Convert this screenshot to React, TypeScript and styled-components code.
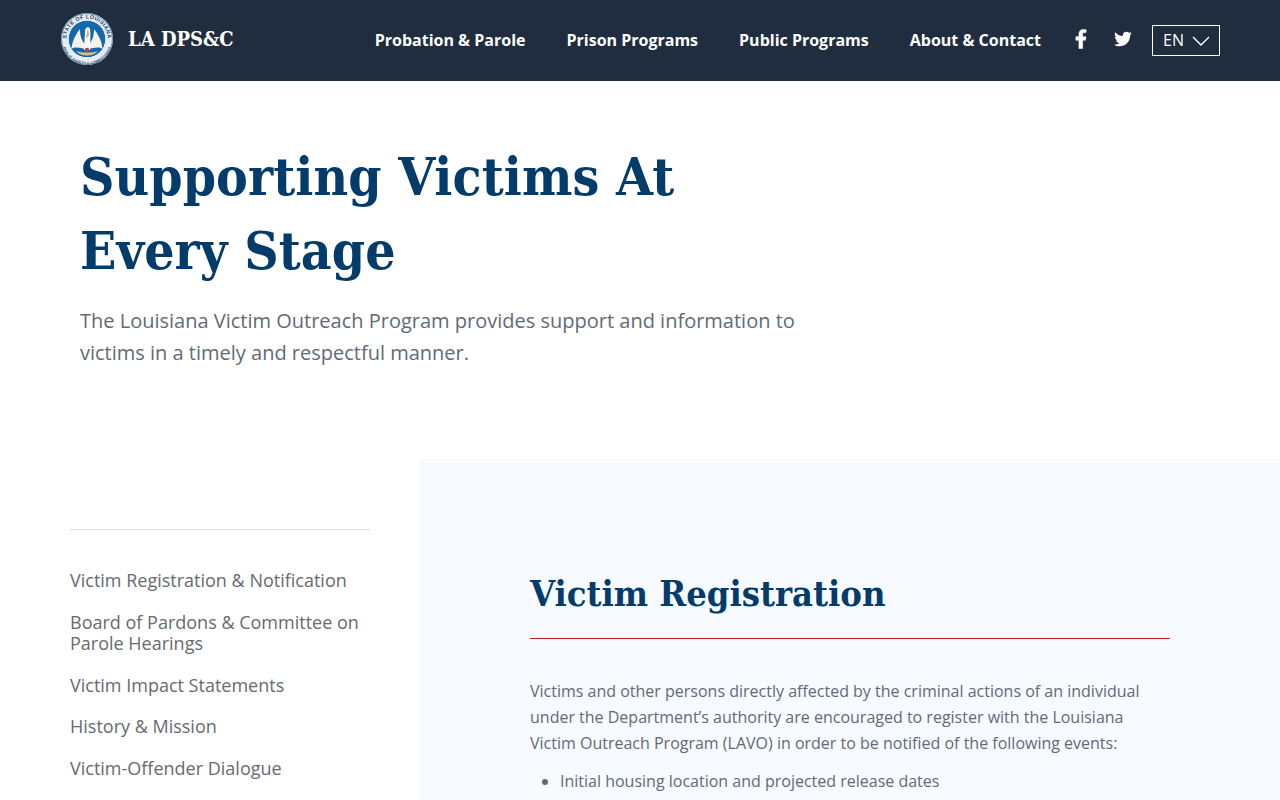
import React from "react";
import styled, { createGlobalStyle } from "styled-components";

const Global = createGlobalStyle`
  html, body { margin: 0; padding: 0; background: #fff; overflow: hidden; height: 800px; }
  * { box-sizing: border-box; }
  body { font-family: "Open Sans", "Liberation Sans", sans-serif; }
`;
const Serif = `"DejaVu Serif Condensed", "DejaVu Serif", "Liberation Serif", serif`;
const Page = styled.div`width: 1280px; height: 800px; overflow: hidden;`;
const Header = styled.header`
  height: 81px; background: #202d3e; display: flex; align-items: center;
  padding: 0 60px; color: #fff;
`;
const Brand = styled.div`display: flex; align-items: center; gap: 14px; margin: -4px auto 0 0;`;
const BrandName = styled.span`
  font-family: ${Serif}; font-weight: 700; font-size: 20px; color: #fff;
`;
const Nav = styled.nav`display: flex; gap: 41px; margin: -2px 34px 0 0;`;
const NavLink = styled.a`font-size: 16px; font-weight: 700; color: #fff; line-height: 22px;`;
const Social = styled.div`display: flex; align-items: center; gap: 27px; margin: -3px 20px 0 0;`;
const Lang = styled.div`
  width: 68px; height: 31px; border: 1px solid #fff; display: flex; align-items: center;
  gap: 8px; padding-left: 10px; font-size: 16px; color: #fff;
`;
const LangLabel = styled.span`margin-top: -2px;`;
const Hero = styled.section`padding: 58px 0 0 80px; height: 378px;`;
const Title = styled.h1`
  margin: 0; width: 720px; font-family: ${Serif}; font-weight: 700; font-size: 53px;
  line-height: 74px; color: #033c6b; letter-spacing: 0.07px;
`;
const Lead = styled.p`
  margin: 18px 0 0; width: 740px; font-size: 20px; line-height: 32px; color: #5f6b76;
`;
const Lower = styled.div`display: flex; align-items: flex-start; height: 341px;`;
const Side = styled.aside`width: 300px; margin: 70px 50px 0 70px; border-top: 1px solid #dcdcdc; padding-top: 40px;`;
const SideItem = styled.a`
  display: block; font-size: 18px; line-height: 21px; color: #666b70; margin-bottom: 20.8px;
`;
const Main = styled.main`
  flex: 1; height: 341px; background: #f7fafe; padding: 109px 110px 0;
`;
const H2 = styled.h2`
  margin: 0; height: 71px; border-bottom: 1px solid #b8202c; font-family: ${Serif};
  font-weight: 700; font-size: 36px; line-height: 50px; color: #033c6b;
`;
const Body = styled.p`margin: 39px 0 0; font-size: 16px; line-height: 26px; color: #5f6b76;`;
const List = styled.ul`margin: 12px 0 0; padding-left: 30px; font-size: 16px; line-height: 26px; color: #5f6b76;`;

const Seal = () => (
  <svg width="54" height="54" viewBox="0 0 54 54" aria-hidden="true">
    <defs>
      <path id="sealTop" d="M6.500 27a20.500 20.500 0 0 1 41 0" />
      <path id="sealBottom" d="M4 27a23 23 0 0 0 46 0" />
    </defs>
    <circle cx="27" cy="27" r="26" fill="#e6edf3" />
    <circle cx="27" cy="27" r="25.400" fill="none" stroke="#3f76a8" strokeWidth="0.800" />
    <text fontFamily="Liberation Sans, sans-serif" fontSize="5.400" fontWeight="700" fill="#1f4468" letterSpacing="0.350">
      <textPath href="#sealTop" startOffset="50%" textAnchor="middle">STATE OF LOUISIANA</textPath>
    </text>
    <text fontFamily="Liberation Sans, sans-serif" fontSize="3.400" fontWeight="700" fill="#1f4468">
      <textPath href="#sealBottom" startOffset="50%" textAnchor="middle" dominantBaseline="hanging">PUBLIC SAFETY &amp; CORRECTIONS</textPath>
    </text>
    <circle cx="27" cy="27" r="18.800" fill="#1668ad" stroke="#f5f7f9" strokeWidth="1" />
    <path d="M25 32 C21 28 20 23 20 17 C16 22 12 29 11.500 37 C15 34 21 36 25 37Z" fill="#f4f2ea" />
    <path d="M29 32 C33 28 34 23 34 17 C38 22 42 29 42.500 37 C39 34 33 36 29 37Z" fill="#f4f2ea" />
    <path d="M24 38 C24 31 25 24 25 19 C25 15 29 14 30 17 C31 23 30 31 30 38Z" fill="#fbf9f2" />
    <path d="M28 16 L26 27 L29 23Z" fill="#c8ab72" />
    <path d="M16 39 C21 45 33 45 38 39 C32 41 22 41 16 39Z" fill="#d9c07f" />
    <circle cx="27" cy="38" r="2.200" fill="#a94a3c" />
  </svg>
);
const Facebook = () => (
  <svg width="12" height="20" viewBox="0 0 320 512" fill="#fff" stroke="#fff" strokeWidth="14" aria-hidden="true">
    <path d="M279 288l14-93h-89v-60c0-25 13-50 52-50h41V6s-37-6-72-6c-73 0-121 44-121 125v70H23v93h81v224h100V288z" />
  </svg>
);
const Twitter = () => (
  <svg width="18" height="16" viewBox="0 0 512 416" fill="#fff" aria-hidden="true">
    <path d="M459 104c.3 4.500.3 9 .3 13.700C459.300 256 354 416 161 416c-59 0-115-17-161-47 8 1 16 1.300 25 1.300 49 0 94-17 130-45-46-1-85-31-98-73 6 1 13 1.600 20 1.600 9 0 19-1.300 28-3.600-48-10-84-52-84-103v-1.300c14 8 30 13 47 13.600C40 140 21 106 21 68c0-20 5-39 15-55C88 77 165 119 252 124c-2-8-3-16-3-24C249 45 294 0 351 0c29 0 56 12 75 32 23-4 45-13 65-25-8 24-24 44-45 57 21-2 41-8 60-16-14 21-32 40-47 56z" />
  </svg>
);
const Chevron = () => (
  <svg width="18" height="10" viewBox="0 0 18 10" fill="none" stroke="#fff" strokeWidth="1.400" aria-hidden="true">
    <path d="M1 1l8 8 8-8" />
  </svg>
);

const nav = ["Probation & Parole", "Prison Programs", "Public Programs", "About & Contact"];
const side = ["Victim Registration & Notification", "Board of Pardons & Committee on Parole Hearings", "Victim Impact Statements", "History & Mission", "Victim-Offender Dialogue"];

export default function App() {
  return (
    <Page>
      <Global />
      <Header>
        <Brand><Seal /><BrandName>LA DPS&amp;C</BrandName></Brand>
        <Nav>{nav.map((n) => <NavLink key={n}>{n}</NavLink>)}</Nav>
        <Social><Facebook /><Twitter /></Social>
        <Lang><LangLabel>EN</LangLabel> <Chevron /></Lang>
      </Header>
      <Hero>
        <Title>Supporting Victims At Every Stage</Title>
        <Lead>The Louisiana Victim Outreach Program provides support and information to victims in a timely and respectful manner.</Lead>
      </Hero>
      <Lower>
        <Side>{side.map((s) => <SideItem key={s}>{s}</SideItem>)}</Side>
        <Main>
          <H2>Victim Registration</H2>
          <Body>Victims and other persons directly affected by the criminal actions of an individual under the Department’s authority are encouraged to register with the Louisiana Victim Outreach Program (LAVO) in order to be notified of the following events:</Body>
          <List><li>Initial housing location and projected release dates</li></List>
        </Main>
      </Lower>
    </Page>
  );
}
